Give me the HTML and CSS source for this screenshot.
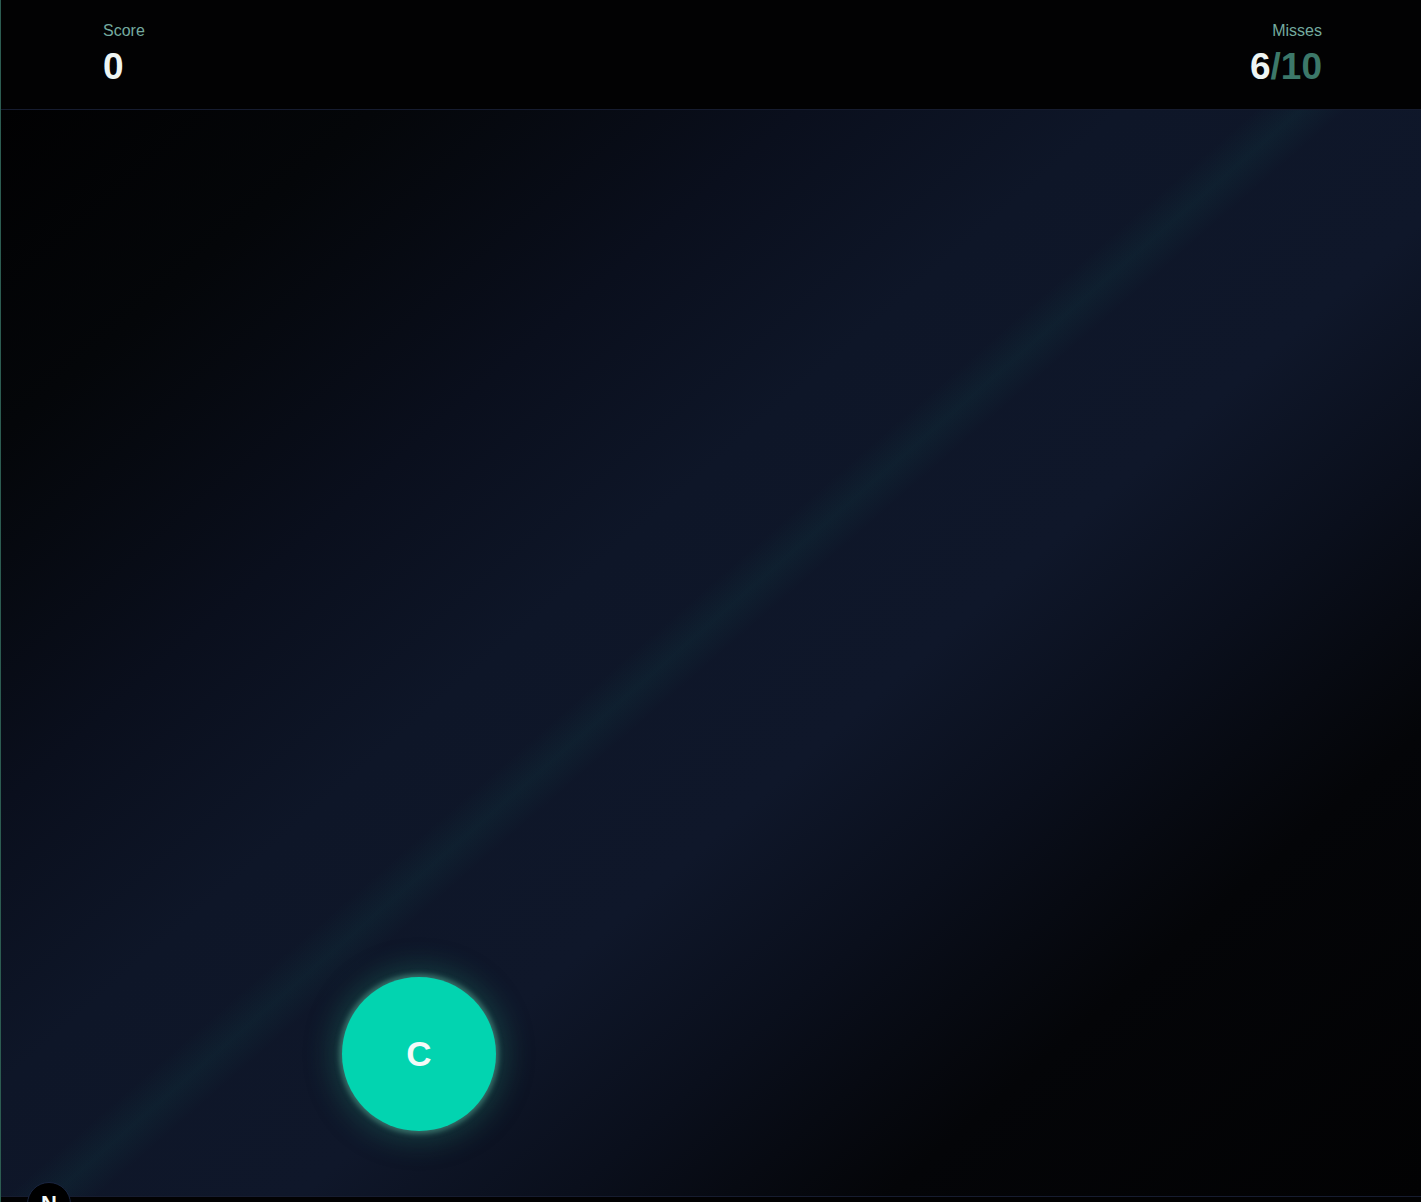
FILE: index.html
```html
<!DOCTYPE html>
<html lang="en">
<head>
    <meta charset="UTF-8">
    <meta name="viewport" content="width=device-width, initial-scale=1.0">
    <title>Letter Drop</title>
    <link rel="stylesheet" href="styles.css">
</head>
<body>
    <div class="page">
        <!-- Skor & miss -->
        <header class="hud">
            <div class="stat">
                <span class="label">Score</span>
                <span class="value">0</span>
            </div>
            <div class="stat stat-right">
                <span class="label">Misses</span>
                <span class="value">6<span class="max">/10</span></span>
            </div>
        </header>

        <!-- Area permainan -->
        <main class="field">
            <div class="ball" style="left: 341px; top: 867px;">C</div>
        </main>

        <footer class="bottom"></footer>

        <div class="ball ball-dark" style="left: 26px; top: 1182px;">N</div>
    </div>
</body>
</html>
```

FILE: styles.css
```css
/* Umum */
body {
    margin: 0;
    padding: 0;
    background-color: #000;
    font-family: "Liberation Sans", Arial, sans-serif;
    overflow: hidden;
}

.page {
    position: relative;
    height: 1202px;
    border-left: 1px solid #2c5c51;
    display: flex;
    flex-direction: column;
}

/* HUD */
.hud {
    height: 110px;
    background-color: #020203;
    border-bottom: 1px solid #161c30;
    display: flex;
    justify-content: space-between;
    align-items: flex-start;
    padding: 21px 99px 0 102px;
    box-sizing: border-box;
    flex-shrink: 0;
}
.stat {
    display: flex;
    flex-direction: column;
}
.stat-right {
    text-align: right;
}
.label {
    font-size: 16px;
    line-height: 20px;
    color: #74ab9f;
}
.value {
    font-size: 37px;
    line-height: 34px;
    font-weight: bold;
    color: #eef5f3;
    margin-top: 9px;
}
.max {
    color: #3c7869;
}

/* Area permainan */
.field {
    position: relative;
    height: 1086px;
    flex-shrink: 0;
    background:
        linear-gradient(139deg, transparent 47%, rgba(20, 150, 130, 0.07) 48.7%, transparent 50.4%),
        linear-gradient(139deg, #010102 0%, #040609 14%, #0a0f1d 30%, #0e1628 42%, #0f172a 58%, #0a0f1c 68%, #040508 80%, #020203 100%);
}

.bottom {
    flex: 1;
    background-color: #020203;
    border-top: 1px solid #161c30;
}

/* Bola huruf */
.ball {
    position: absolute;
    width: 154px;
    height: 154px;
    border-radius: 50%;
    background-color: #02d4b0;
    color: #f4faf8;
    font-size: 35px;
    font-weight: bold;
    display: flex;
    align-items: center;
    justify-content: center;
    box-shadow: 0 0 5px 3px rgba(80, 150, 135, 0.6), 0 0 26px 12px rgba(30, 120, 100, 0.35);
}
.ball-dark {
    width: 44px;
    height: 44px;
    background-color: #000;
    border: 1px solid #1a2540;
    box-shadow: none;
    font-size: 22px;
    box-sizing: border-box;
}
```
